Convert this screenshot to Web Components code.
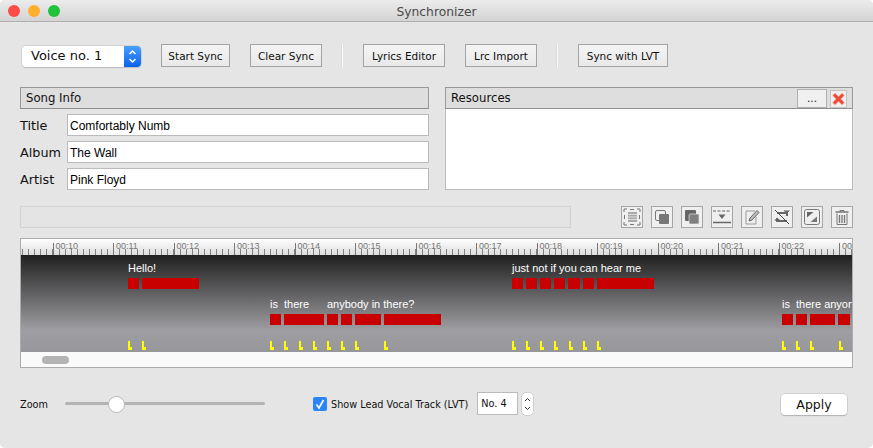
<!DOCTYPE html>
<html>
<head>
<meta charset="utf-8">
<title>Synchronizer</title>
<style>
  html, body { margin: 0; padding: 0; background: #fff; }
  body { width: 873px; height: 448px; overflow: hidden; font-family: "DejaVu Sans", sans-serif; }
  .toolbar { display: flex; align-items: center; gap: 20px; padding-left: 2px; height: 23px; }
  .toolbar voice-select { align-self: flex-end; }
  .sep { width: 1px; height: 23px; background: #fafafa; border-left: 1px solid #dcdcdc; margin-left: -1px; }
  .panels { display: grid; grid-template-columns: 409px 408px; column-gap: 16px; height: 103px; margin-top: 20px; }
  .song { display: flex; flex-direction: column; gap: 5px; }
  .res { display: flex; flex-direction: column; }
  .res-body { flex: 1; background: #fff; border: 1px solid #bcbcbc; border-top: 0; }
  .tools { display: flex; align-items: stretch; height: 22px; margin-top: 16px; gap: 8px; }
  .progress { width: 549px; margin-right: 42px; border: 1px solid #d2d2d2; background: #e4e4e4; }
  .bottom { display: flex; align-items: center; height: 23px; margin-top: 24px; }
  .bottom push-button { margin: 2px 6px 0 auto; }
  svg { display: block; }
  icon-button svg { filter: blur(.35px); }
</style>
</head>
<body>
<template id="t-window">
  <style>
    :host { display: block; height: 448px; background: #e5e5e5; border-radius: 5px; overflow: hidden; }
    .content { padding: 22px 20px 0; }
  </style>
  <slot name="bar"></slot>
  <div class="content"><slot></slot></div>
</template>

<template id="t-bar">
  <style>
    :host { display: block; height: 21px; background: linear-gradient(#ececec, #d3d3d3); border-bottom: 1px solid #b0b0b0; position: relative; }
    .row { display: flex; gap: 8px; padding: 5px 0 0 8px; }
    i { display: block; width: 12px; height: 12px; border-radius: 50%; }
    .title { position: absolute; left: 0; right: 0; top: 5px; text-align: center; font: 12.3px/15px "DejaVu Sans", sans-serif; color: #4a4a4a; }
  </style>
  <div class="row">
    <i style="background:#fc4c48"></i><i style="background:#fdb02b"></i><i style="background:#20c13b"></i>
  </div>
  <div class="title"><slot></slot></div>
</template>

<template id="t-tool-button">
  <style>
    :host { display: block; box-sizing: border-box; height: 23px; border: 1px solid #a3a3a3; background: linear-gradient(#f4f4f4, #e9e9e9); font: 10.5px/22px "DejaVu Sans", sans-serif; color: #111; text-align: center; white-space: nowrap; }
  </style>
  <slot></slot>
</template>

<template id="t-select">
  <style>
    :host { display: flex; box-sizing: border-box; width: 119px; height: 21px; border-radius: 4px; background: #fff; box-shadow: 0 0 0 .5px #c4c4c4, 0 1px 1px #b8b8b8; overflow: hidden; font: 13px/20px "DejaVu Sans", sans-serif; color: #111; }
    .label { flex: 1; padding-left: 9px; }
    .arrows { width: 17px; background: linear-gradient(#4a9fff, #0a62ea); }
  </style>
  <div class="label"><slot></slot></div>
  <div class="arrows">
    <svg width="17" height="21" viewBox="0 0 17 21" fill="none" stroke="#fff" stroke-width="1.5"><path d="M5.500 8 8.500 5 11.500 8M5.500 13 8.500 16 11.500 13"/></svg>
  </div>
</template>

<template id="t-panel-header">
  <style>
    :host { display: flex; align-items: center; box-sizing: border-box; height: 22px; padding-left: 5px; background: #dedede; border: 1px solid #999; border-bottom-color: #8f8f8f; font: 11.7px "DejaVu Sans", sans-serif; color: #111; }
    .extra { margin-left: auto; display: flex; gap: 3px; padding-right: 5px; }
  </style>
  <slot></slot>
  <div class="extra"><slot name="extra"></slot></div>
</template>

<template id="t-field">
  <style>
    :host { display: flex; align-items: center; height: 22px; font: 12.8px "DejaVu Sans", sans-serif; color: #111; }
    .name { width: 47px; }
    .value { flex: 1; box-sizing: border-box; height: 22px; padding-left: 2px; background: #fff; border: 1px solid #bbb; font: 12px/22px "Liberation Sans", sans-serif; color: #000; }
  </style>
  <div class="name"></div>
  <div class="value"><slot></slot></div>
</template>

<template id="t-icon-button">
  <style>
    :host { display: block; box-sizing: border-box; width: 22px; height: 22px; border: 1px solid #a6a6a6; background: #efefef; }
  </style>
  <slot></slot>
</template>

<template id="t-timeline">
  <style>
    :host { display: block; box-sizing: border-box; height: 130px; margin-top: 10px; border: 1px solid #acacac; overflow: hidden; font-family: "Liberation Sans", sans-serif; }
    .ruler { display: flex; height: 16px; margin-left: -29px; background: linear-gradient(#fff, #dcdcdc); overflow: hidden; }
    .sec { flex: 0 0 60.5px; box-sizing: border-box; height: 16px; padding: 2px 0 0 3px; font-size: 9px; line-height: 11px; color: #777; white-space: nowrap;
      background:
        linear-gradient(#777, #777) left bottom / 1px 12px no-repeat,
        repeating-linear-gradient(90deg, #808080 0 1px, transparent 1px 6.05px) left bottom / 100% 6px no-repeat; }
    .track { position: relative; height: 97px; background: linear-gradient(#202020, #9f9fa3 78%, #97979b); overflow: hidden; }
    .word { position: absolute; font-size: 11px; line-height: 13px; color: #fff; white-space: nowrap; }
    .block { position: absolute; height: 11px; background: #c80000; }
    .mark { position: absolute; top: 86px; width: 4px; height: 9px; }
    .scroll { position: relative; height: 15px; background: #fafafa; }
    .thumb { position: absolute; left: 21px; top: 4px; width: 27px; height: 8px; border-radius: 4px; background: #b4b4b4; }
  </style>
  <div class="ruler"></div>
  <div class="track"></div>
  <div class="scroll"><div class="thumb"></div></div>
</template>

<template id="t-slider">
  <style>
    :host { display: flex; align-items: center; font: 9.7px "DejaVu Sans", sans-serif; color: #111; }
    .name { width: 45px; padding-top: 2px; }
    .rail { position: relative; width: 200px; height: 3px; border-radius: 2px; background: #b4b4b4; }
    .knob { position: absolute; left: 43px; top: -6px; box-sizing: border-box; width: 17px; height: 17px; border-radius: 50%; background: #fff; border: 1px solid #b8b8b8; }
  </style>
  <div class="name"><slot></slot></div>
  <div class="rail"><div class="knob"></div></div>
</template>

<template id="t-check">
  <style>
    :host { display: flex; align-items: center; gap: 4px; margin-left: 48px; font: 9.7px "DejaVu Sans", sans-serif; color: #111; white-space: nowrap; }
    .box { width: 14px; height: 14px; border-radius: 2px; background: #2b85f8; }
    .text { padding-top: 2px; }
  </style>
  <div class="box"><svg width="14" height="14" viewBox="0 0 14 14" fill="none" stroke="#fff" stroke-width="1.6"><path d="M3.500 7.500 6 11 10.500 3"/></svg></div>
  <div class="text"><slot></slot></div>
</template>

<template id="t-stepper">
  <style>
    :host { display: flex; align-items: center; gap: 4px; margin-left: 9px; }
    .val { box-sizing: border-box; width: 41px; height: 23px; padding-left: 3px; background: #fff; border: 1px solid #bbb; font: 9.7px/22px "DejaVu Sans", sans-serif; color: #111; }
    .arr { width: 11px; height: 22px; border-radius: 4px; background: #fff; box-shadow: 0 0 0 .5px #bbb; }
  </style>
  <div class="val"><slot></slot></div>
  <div class="arr"><svg width="11" height="22" viewBox="0 0 11 22" fill="none" stroke="#333" stroke-width="1"><path d="M3 8 5.500 5.500 8 8M3 14 5.500 16.500 8 14"/></svg></div>
</template>

<template id="t-push">
  <style>
    :host { display: block; box-sizing: border-box; width: 66px; height: 21px; border-radius: 4px; background: #fff; box-shadow: 0 0 0 .5px #bbb, 0 1px 1px #aaa; font: 12.5px/21px "DejaVu Sans", sans-serif; color: #111; text-align: center; }
  </style>
  <slot></slot>
</template>

<sync-window>
  <title-bar slot="bar">Synchronizer</title-bar>
  <div class="toolbar">
    <voice-select>Voice no. 1</voice-select>
    <tool-button style="width:69px">Start Sync</tool-button>
    <tool-button style="width:72px">Clear Sync</tool-button>
    <div class="sep"></div>
    <tool-button style="width:82px">Lyrics Editor</tool-button>
    <tool-button style="width:72px">Lrc Import</tool-button>
    <div class="sep"></div>
    <tool-button style="width:90px">Sync with LVT</tool-button>
  </div>
  <div class="panels">
    <div class="song">
      <panel-header>Song Info</panel-header>
      <info-field name="Title">Comfortably Numb</info-field>
      <info-field name="Album">The Wall</info-field>
      <info-field name="Artist">Pink Floyd</info-field>
    </div>
    <div class="res">
      <panel-header>Resources
        <tool-button slot="extra" style="width:30px;height:19px;line-height:16px;background:#f0f0f0;border-color:#b0b0b0">...</tool-button>
        <icon-button slot="extra" style="width:17px;height:18px;margin-top:1px;border-color:#c4c4c4">
          <svg width="15" height="16" viewBox="0 0 15 16" fill="none" stroke-linecap="square"><path d="M4 4.500 11 11.500M11 4.500 4 11.500" stroke="#f7b8ad" stroke-width="4.200"/><path d="M4 4.500 11 11.500M11 4.500 4 11.500" stroke="#ec4a36" stroke-width="2.800"/></svg>
        </icon-button>
      </panel-header>
      <div class="res-body"></div>
    </div>
  </div>
  <div class="tools">
    <div class="progress"></div>
    <icon-button><svg width="20" height="20" viewBox="0 0 20 20" fill="none" stroke="#777"><path d="M2 5V2H5M15 2H18V5M18 15V18H15M5 18H2V15M8 2.500H12M8 17.500H12M2.500 8V12M17.500 8V12"/><rect x="6" y="5" width="9" height="10" fill="#aaa" stroke="none"/><path d="M6 7.500H15M6 10H15M6 12.500H15" stroke="#ddd"/></svg></icon-button>
    <icon-button><svg width="20" height="20" viewBox="0 0 20 20"><rect x="3.500" y="3.500" width="10" height="10" rx="1.500" fill="none" stroke="#777"/><rect x="7" y="7" width="10" height="10" rx="1" fill="#777"/></svg></icon-button>
    <icon-button><svg width="20" height="20" viewBox="0 0 20 20"><rect x="3" y="3" width="11" height="11" rx="1" fill="#666"/><rect x="7" y="7" width="10" height="10" rx="1" fill="#808080" stroke="#efefef" stroke-width=".6"/></svg></icon-button>
    <icon-button><svg width="20" height="20" viewBox="0 0 20 20"><path d="M1 4H19" stroke="#666" stroke-dasharray="3 1.500"/><path d="M6.500 7.500H13.500L10 12Z" fill="#666"/><path d="M1 15.500H19" stroke="#666" stroke-width="1.500"/></svg></icon-button>
    <icon-button><svg width="20" height="20" viewBox="0 0 20 20" fill="none"><path d="M13 4H4V17H14V10" stroke="#999"/><path d="M7 14 8 11 15 3.500 17 5.500 10 13Z" fill="#bbb" stroke="#666"/></svg></icon-button>
    <icon-button><svg width="20" height="20" viewBox="0 0 20 20" fill="none" stroke="#666"><path d="M5 6H15V9M15 14H5V11" stroke-width="2"/><path d="M12 3.500 15 6 17.500 3.500M3 13.500 5 11 8 13.500" fill="#666"/><path d="M3 3 17 17" stroke="#444"/></svg></icon-button>
    <icon-button><svg width="20" height="20" viewBox="0 0 20 20"><rect x="2.500" y="2.500" width="15" height="15" rx="2" fill="none" stroke="#777"/><path d="M5 5H11.500L5 10.500Z" fill="#666"/><path d="M15 15H8.500L15 9.500Z" fill="#777"/></svg></icon-button>
    <icon-button><svg width="20" height="20" viewBox="0 0 20 20" fill="none" stroke="#777"><path d="M3.500 5H16.500" stroke-width="1.500"/><path d="M8 5V3.500H12V5"/><path d="M5 6.500V17.500H15V6.500"/><path d="M7.500 8V16M10 8V16M12.500 8V16" stroke-width="1.300"/></svg></icon-button>
  </div>
  <lyric-timeline></lyric-timeline>
  <div class="bottom">
    <zoom-slider>Zoom</zoom-slider>
    <check-option>Show Lead Vocal Track (LVT)</check-option>
    <number-stepper>No. 4</number-stepper>
    <push-button>Apply</push-button>
  </div>
</sync-window>

<script>
  class Stamped extends HTMLElement {
    constructor(id) {
      super();
      this._root = this.attachShadow({ mode: "open" });
      this._root.appendChild(document.getElementById(id).content.cloneNode(true));
    }
  }

  customElements.define("sync-window", class extends Stamped { constructor() { super("t-window"); } });
  customElements.define("title-bar", class extends Stamped { constructor() { super("t-bar"); } });
  customElements.define("tool-button", class extends Stamped { constructor() { super("t-tool-button"); } });
  customElements.define("voice-select", class extends Stamped { constructor() { super("t-select"); } });
  customElements.define("panel-header", class extends Stamped { constructor() { super("t-panel-header"); } });
  customElements.define("icon-button", class extends Stamped { constructor() { super("t-icon-button"); } });
  customElements.define("zoom-slider", class extends Stamped { constructor() { super("t-slider"); } });
  customElements.define("check-option", class extends Stamped { constructor() { super("t-check"); } });
  customElements.define("number-stepper", class extends Stamped { constructor() { super("t-stepper"); } });
  customElements.define("push-button", class extends Stamped { constructor() { super("t-push"); } });

  customElements.define("info-field", class extends Stamped {
    constructor() { super("t-field"); }
    connectedCallback() {
      this._root.querySelector(".name").textContent = this.getAttribute("name");
    }
  });

  // lyrics data: x is page x, the track starts at 21
  const WORDS = [
    [128, 262, "Hello!"],
    [270, 298, "is"], [284, 298, "there"], [327, 298, "anybody in there?"],
    [512, 262, "just not if you can hear me"],
    [782, 298, "is"], [796, 298, "there anyone"]
  ];
  const BLOCKS = [
    [278, [[128, 11], [142, 57], [512, 11], [526, 11], [540, 11], [554, 11], [568, 12], [583, 11], [597, 57]]],
    [314, [[270, 11], [284, 40], [327, 11], [341, 11], [355, 26], [384, 57], [782, 11], [796, 11], [810, 25], [838, 12]]]
  ];
  const MARKS = [128, 142, 270, 284, 299, 313, 327, 341, 355, 384, 512, 526, 540, 554, 569, 583, 597, 782, 796, 810, 839];

  customElements.define("lyric-timeline", class extends Stamped {
    constructor() { super("t-timeline"); }
    connectedCallback() {
      const ruler = this._root.querySelector(".ruler");
      let secs = "";
      for (let s = 9; s <= 23; s++) secs += `<div class="sec">${s === 9 ? "" : "00:" + s}</div>`;
      ruler.innerHTML = secs;

      const track = this._root.querySelector(".track");
      let html = "";
      for (const [x, y, text] of WORDS) html += `<div class="word" style="left:${x - 21}px;top:${y - 255}px">${text}</div>`;
      for (const [y, row] of BLOCKS) {
        for (const [x, w] of row) html += `<div class="block" style="left:${x - 21}px;top:${y - 255}px;width:${w}px"></div>`;
      }
      for (const x of MARKS) {
        html += `<svg class="mark" style="left:${x - 21}px" viewBox="0 0 4 9"><path d="M0 0H2V6H4V9H0Z" fill="#ff0"/></svg>`;
      }
      track.innerHTML = html;
    }
  });
</script>
</body>
</html>
